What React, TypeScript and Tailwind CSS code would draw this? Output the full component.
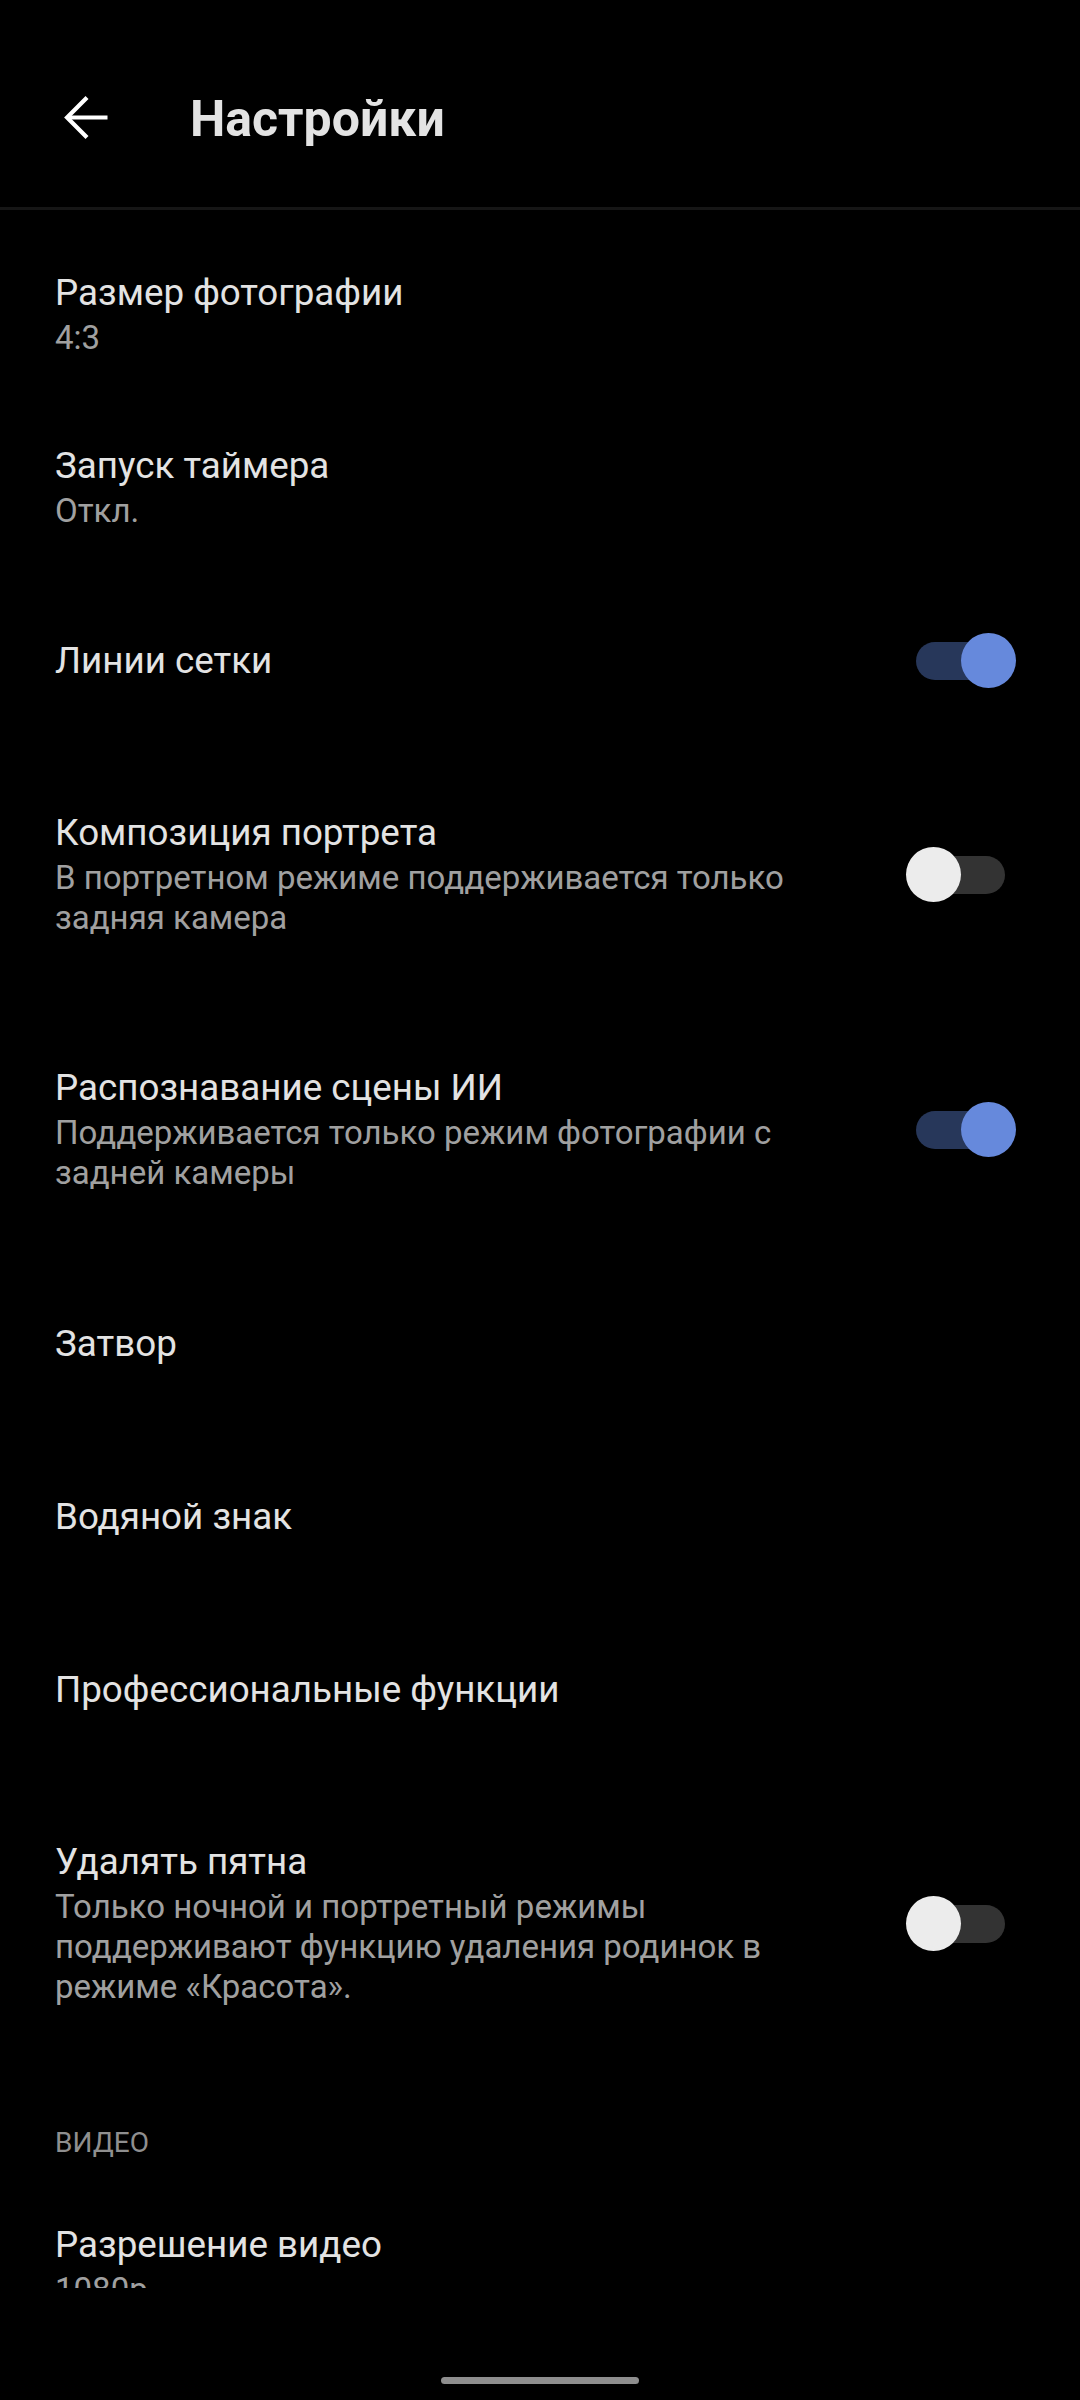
import React from "react";

type Item = {
  title: string;
  sub?: string[];
  toggle?: boolean;
};

const photoItems: Item[] = [
  { title: "Размер фотографии", sub: ["4:3"] },
  { title: "Запуск таймера", sub: ["Откл."] },
  { title: "Линии сетки", toggle: true },
  {
    title: "Композиция портрета",
    sub: ["В портретном режиме поддерживается только задняя камера"],
    toggle: false,
  },
  {
    title: "Распознавание сцены ИИ",
    sub: ["Поддерживается только режим фотографии с задней камеры"],
    toggle: true,
  },
  { title: "Затвор" },
  { title: "Водяной знак" },
  { title: "Профессиональные функции" },
  {
    title: "Удалять пятна",
    sub: [
      "Только ночной и портретный режимы поддерживают функцию удаления родинок в режиме «Красота».",
    ],
    toggle: false,
  },
];

function Toggle({ on }: { on: boolean }) {
  // thumb is larger than the track and hangs over it
  return (
    <div className="relative h-[38px] w-[110px] shrink-0">
      <div
        className={
          on
            ? "absolute inset-y-0 left-[10px] right-[11px] rounded-full bg-[#27375a]"
            : "absolute inset-y-0 left-[10px] right-[11px] rounded-full bg-[#333333]"
        }
      />
      <div
        className={
          on
            ? "absolute right-0 top-[-8.5px] h-[55px] w-[55px] rounded-full bg-[#6689dc]"
            : "absolute left-0 top-[-8.5px] h-[55px] w-[55px] rounded-full bg-[#ececec]"
        }
      />
    </div>
  );
}

function Row({ item }: { item: Item }) {
  const hasToggle = item.toggle !== undefined;
  return (
    <div
      className={
        hasToggle
          ? "flex min-h-[173px] items-center py-[64px] pl-[55px] pr-[64px]"
          : "flex min-h-[173px] items-center pl-[55px] pr-[64px]"
      }
    >
      <div className="flex-1 pr-[57px]">
        <p className="text-[36.75px] leading-[44px] text-[#e3e3e3]">{item.title}</p>
        {item.sub?.map((line) => (
          <p key={line} className="mt-[3px] text-[33px] leading-[40px] text-[#a0a0a0]">
            {line}
          </p>
        ))}
      </div>
      {hasToggle && <Toggle on={!!item.toggle} />}
    </div>
  );
}

export default function App() {
  return (
    <div className="flex h-[2400px] w-[1080px] flex-col bg-black font-['Roboto','Noto_Sans',sans-serif]">
      <header className="flex h-[207px] items-center pt-[28px]">
        <svg
          className="ml-[55px] h-[63px] w-[63px]"
          viewBox="0 0 24 24"
          fill="none"
          stroke="#ffffff"
          strokeWidth={1.6}
        >
          <path d="M20 12H4.6" />
          <path d="M12.2 4.4L4.6 12l7.6 7.6" />
        </svg>
        <h1 className="ml-[72px] mt-[2px] text-[50px] font-bold leading-[52px] text-[#e3e3e3]">
          Настройки
        </h1>
      </header>
      <div className="h-[3px] bg-[#161616]" />

      <div className="h-[2078px] overflow-hidden pt-[18px]">
        {photoItems.map((item) => (
          <Row key={item.title} item={item} />
        ))}

        <div className="pb-[21px] pl-[55px] pt-[56px]">
          <p className="text-[28px] leading-[32px] text-[#8f8f8f]">ВИДЕО</p>
        </div>

        <Row item={{ title: "Разрешение видео", sub: ["1080p"] }} />
      </div>

      <div className="flex flex-1 justify-center pt-[89px]">
        <div className="h-[7px] w-[198px] rounded-full bg-[#8e8e8e]" />
      </div>
    </div>
  );
}
